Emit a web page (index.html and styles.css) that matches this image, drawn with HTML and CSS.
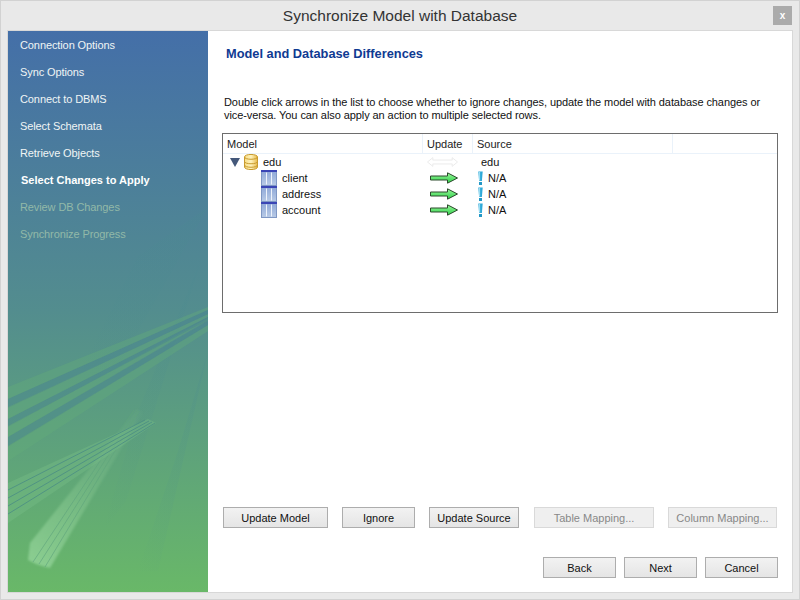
FILE: index.html
```html
<!DOCTYPE html>
<html lang="en">
<head>
<meta charset="utf-8">
<title>Synchronize Model with Database</title>
<link rel="stylesheet" href="styles.css">
</head>
<body>
<svg class="defs" width="0" height="0" aria-hidden="true">
  <defs>
    <linearGradient id="arrowGreen" x1="0" y1="0" x2="0" y2="1">
      <stop offset="0" stop-color="#9af79a"/><stop offset="1" stop-color="#2ed04a"/>
    </linearGradient>
    <linearGradient id="tableFill" x1="0" y1="0" x2="0" y2="1">
      <stop offset="0" stop-color="#8fa8d8"/><stop offset="1" stop-color="#b9cbe6"/>
    </linearGradient>
    <linearGradient id="dbFill" x1="0" y1="0" x2="1" y2="0">
      <stop offset="0" stop-color="#f7dc83"/><stop offset="0.5" stop-color="#fff3bd"/><stop offset="1" stop-color="#e7b94a"/>
    </linearGradient>
    <linearGradient id="paleFade" gradientUnits="userSpaceOnUse" x1="132" y1="380" x2="30" y2="535">
      <stop offset="0" stop-color="#8ccb94" stop-opacity="0.05"/>
      <stop offset="0.45" stop-color="#8ccb94" stop-opacity="0.3"/>
      <stop offset="1" stop-color="#9ad8a0" stop-opacity="0.7"/>
    </linearGradient>
    <linearGradient id="rayFade" x1="1" y1="0" x2="0" y2="1">
      <stop offset="0" stop-color="#4a8a90" stop-opacity="0.2"/>
      <stop offset="1" stop-color="#4a8a90" stop-opacity="0"/>
    </linearGradient>
    <filter id="soft" x="-10%" y="-10%" width="120%" height="120%"><feGaussianBlur stdDeviation="0.8"/></filter>
    <symbol id="tableIcon" viewBox="0 0 16 16">
      <rect x="0" y="0" width="16" height="16" fill="#b4c6e4"/>
      <rect x="0.5" y="1" width="15" height="14.500" fill="url(#tableFill)" stroke="#7f97c4"/>
      <rect x="0" y="0" width="16" height="2" fill="#3a45b5"/>
      <path d="M5.500 2.500v12M10.500 2.500v12" stroke="#eef3fb" stroke-width="1"/>
    </symbol>
    <symbol id="arrowIcon" viewBox="0 0 28 12">
      <path d="M0.500 4h17V0.800L27.500 6 17.500 11.200V8H0.500z" fill="url(#arrowGreen)" stroke="#2c4a2c"/>
    </symbol>
    <symbol id="warnIcon" viewBox="0 0 5 14">
      <path d="M0.300 0.500h4.400L3.900 10H1.100z" fill="#2fa9d8"/>
      <path d="M1.600 1v8.500" stroke="#a8e4f7"/>
      <rect x="1" y="11" width="3" height="3" fill="#2397c6"/>
    </symbol>
  </defs>
</svg>
<div class="window">
  <header class="titlebar">
    <h1 class="title">Synchronize Model with Database</h1>
    <span class="close">x</span>
  </header>
  <div class="content">
    <nav class="sidebar">
      <svg class="art" viewBox="0 0 200 561" width="200" height="561" aria-hidden="true">
        <g>
          <polygon class="ray" points="200,176 130,225 70,345 105,345"/>
          <polygon class="ray" points="200,320 170,420 130,540 150,540"/>
          <polygon class="ray" points="192,232 130,380 95,500 118,470"/>
        </g>
        <g class="beam-light">
          <polygon points="200,276 0,356 0,368 200,279"/>
          <polygon points="200,283 0,377 0,388 200,286"/>
          <polygon points="200,287 0,396 0,406 200,289"/>
          <polygon points="200,294 0,416 0,430 200,300"/>
        </g>
        <g class="beam-dark">
          <polygon points="200,279 0,368 0,376 200,283"/>
          <polygon points="200,286 0,388 0,395 200,289"/>
          <polygon points="200,290 0,406 0,415 200,294"/>
        </g>
        <polygon class="beam-pale" filter="url(#soft)" points="129,378 135,381 42,537 34,535 28,533 20,529 22,512"/>
        <g class="beam-stripe">
          <line x1="126" y1="379" x2="25" y2="531"/>
          <line x1="129" y1="379" x2="31" y2="533"/>
          <line x1="131" y1="380" x2="37" y2="536"/>
        </g>
        <polygon class="beam-cross" points="140,388 148,392 0,492 0,452"/>
        <g class="beam-stripe-dark">
          <line x1="137" y1="389" x2="0" y2="459"/>
          <line x1="141" y1="390" x2="0" y2="467"/>
          <line x1="144" y1="391" x2="0" y2="475"/>
          <line x1="147" y1="392" x2="0" y2="483"/>
        </g>
      </svg>
      <ul class="steps">
        <li class="step">Connection Options</li>
        <li class="step">Sync Options</li>
        <li class="step">Connect to DBMS</li>
        <li class="step">Select Schemata</li>
        <li class="step">Retrieve Objects</li>
        <li class="step current">Select Changes to Apply</li>
        <li class="step pending">Review DB Changes</li>
        <li class="step pending">Synchronize Progress</li>
      </ul>
    </nav>
    <main class="main">
      <h2 class="heading">Model and Database Differences</h2>
      <p class="intro">Double click arrows in the list to choose whether to ignore changes, update the model with database changes or vice-versa. You can also apply an action to multiple selected rows.</p>
      <section class="tree">
        <div class="tree-head">
          <span class="col col-model">Model</span>
          <span class="col col-update">Update</span>
          <span class="col col-source">Source</span>
          <span class="col col-rest"></span>
        </div>
        <div class="row">
          <div class="cell-model">
            <svg class="twisty" width="10" height="9" viewBox="0 0 10 9"><path d="M0 0h10L5 9z" fill="#44587a"/></svg>
            <svg class="db" width="14" height="16" viewBox="0 0 14 16">
              <path d="M0.500 3c0-3.400 13-3.400 13 0v10c0 3.400-13 3.400-13 0z" fill="url(#dbFill)" stroke="#c89a2e"/>
              <path d="M0.500 3c0 3 13 3 13 0M0.500 7.500c0 3 13 3 13 0M0.500 11c0 3 13 3 13 0" fill="none" stroke="#c89a2e"/>
            </svg>
            <span class="name">edu</span>
          </div>
          <div class="cell-update top">
            <svg width="31" height="12" viewBox="0 0 32 12"><path d="M0.500 6L6 1.500V4h20V1.500L31.500 6 26 10.500V8H6v2.500z" fill="#fff" stroke="#eaeaea"/></svg>
          </div>
          <div class="cell-source plain">edu</div>
        </div>
        <div class="row">
          <div class="cell-model child"><svg class="tbl"><use href="#tableIcon"/></svg><span class="name">client</span></div>
          <div class="cell-update"><svg class="arrow"><use href="#arrowIcon"/></svg></div>
          <div class="cell-source"><svg class="warn"><use href="#warnIcon"/></svg>N/A</div>
        </div>
        <div class="row">
          <div class="cell-model child"><svg class="tbl"><use href="#tableIcon"/></svg><span class="name">address</span></div>
          <div class="cell-update"><svg class="arrow"><use href="#arrowIcon"/></svg></div>
          <div class="cell-source"><svg class="warn"><use href="#warnIcon"/></svg>N/A</div>
        </div>
        <div class="row">
          <div class="cell-model child"><svg class="tbl"><use href="#tableIcon"/></svg><span class="name">account</span></div>
          <div class="cell-update"><svg class="arrow"><use href="#arrowIcon"/></svg></div>
          <div class="cell-source"><svg class="warn"><use href="#warnIcon"/></svg>N/A</div>
        </div>
      </section>
      <div class="actions">
        <button class="btn w-model">Update Model</button>
        <button class="btn w-ignore">Ignore</button>
        <button class="btn w-source">Update Source</button>
        <button class="btn w-table off">Table Mapping...</button>
        <button class="btn w-column off">Column Mapping...</button>
      </div>
      <div class="nav-buttons">
        <button class="btn w-nav">Back</button>
        <button class="btn w-nav">Next</button>
        <button class="btn w-nav">Cancel</button>
      </div>
    </main>
  </div>
</div>
</body>
</html>
```
FILE: styles.css
```css
* { box-sizing: border-box; }
html, body { margin: 0; padding: 0; }
body { width: 800px; height: 600px; overflow: hidden; font-family: "Liberation Sans", Arial, sans-serif; font-size: 11px; color: #111; }
.defs { display: block; height: 0; }
.window { width: 800px; height: 600px; background: #e9e9e9; border: 1px solid #d2d2d2; padding: 0 7px 7px; display: flex; flex-direction: column; }
.titlebar { height: 30px; flex: none; display: flex; align-items: center; justify-content: center; position: relative; }
.title { margin: 0; font-size: 15.500px; font-weight: 400; color: #333; }
.close { position: absolute; right: 0; top: 5px; width: 19px; height: 19px; background: #ababab; color: #fff; font-weight: 700; font-size: 10px; display: flex; align-items: center; justify-content: center; }
.content { flex: 1; display: flex; background: #fff; box-shadow: 0 0 0 1px #d8d8d8; min-height: 0; }
.sidebar { width: 200px; flex: none; position: relative; background: linear-gradient(180deg, #446fa8 0%, #538d8e 50%, #69b868 100%); overflow: hidden; }
.art { position: absolute; left: 0; top: 0; }
.ray { fill: url(#rayFade); }
.beam-dark polygon { fill: #49868f; opacity: 0.5; }
.beam-light polygon { fill: #64ad78; opacity: 0.38; }
.beam-pale { fill: url(#paleFade); }
.beam-stripe line { stroke: #5fa47c; stroke-width: 0.8; opacity: 0.8; }
.beam-cross { fill: #79bd88; opacity: 0.4; }
.beam-stripe-dark line { stroke: #4c8f84; stroke-width: 1; opacity: 0.85; }
.steps { list-style: none; margin: 0; padding: 1px 0 0; position: relative; }
.step { height: 27px; line-height: 27px; padding-left: 12px; color: #f0f5f5; letter-spacing: -0.1px; }
.step.current { color: #fff; font-weight: 700; padding-left: 13px; letter-spacing: 0; }
.step.pending { color: #92b9a8; }
.main { flex: 1; min-width: 0; display: flex; flex-direction: column; padding: 0 14px 14px; }
.heading { margin: 14px 0 0 4px; height: 18px; line-height: 18px; font-size: 12.800px; font-weight: 700; color: #0f3a92; }
.intro { margin: 33px 0 0 2px; line-height: 13px; color: #111; letter-spacing: -0.08px; }
.tree { margin-top: 11px; height: 180px; border: 1px solid #6d6d6d; flex: none; }
.tree-head { display: flex; height: 20px; border-bottom: 1px solid #eaf2fa; line-height: 20px; color: #222; }
.col { border-right: 1px solid #eaf2fa; padding-left: 4px; }
.col-model { width: 200px; }
.col-update { width: 50px; }
.col-source { width: 200px; }
.col-rest { flex: 1; border-right: 0; }
.row { display: flex; height: 16px; align-items: center; line-height: 16px; }
.cell-model { width: 200px; display: flex; align-items: center; padding-left: 7px; }
.cell-model.child { padding-left: 38px; }
.cell-update { width: 50px; padding-left: 7px; display: flex; align-items: center; }
.cell-update.top { padding-left: 4px; }
.cell-source { padding-left: 5px; display: flex; align-items: center; }
.cell-source.plain { padding-left: 8px; }
.twisty { margin-right: 4px; }
.db { margin-right: 5px; }
.tbl { width: 16px; height: 16px; margin-right: 5px; }
.arrow { width: 28px; height: 12px; }
.warn { width: 5px; height: 14px; margin-right: 5px; }
.actions { margin-top: auto; display: flex; padding-left: 1px; }
.btn { height: 21px; padding: 0; font: inherit; font-size: 11px; color: #111; border: 1px solid #adadad; background: linear-gradient(180deg, #f2f2f2, #e5e5e5); }
.btn.off { color: #888; border-color: #d9d9d9; background: #efefef; }
.w-model { width: 105px; margin-right: 14px; }
.w-ignore { width: 73px; margin-right: 14px; }
.w-source { width: 90px; margin-right: 15px; }
.w-table { width: 120px; margin-right: 14px; }
.w-column { width: 109px; }
.nav-buttons { margin-top: 29px; display: flex; justify-content: flex-end; gap: 8px; }
.w-nav { width: 73px; }
```
